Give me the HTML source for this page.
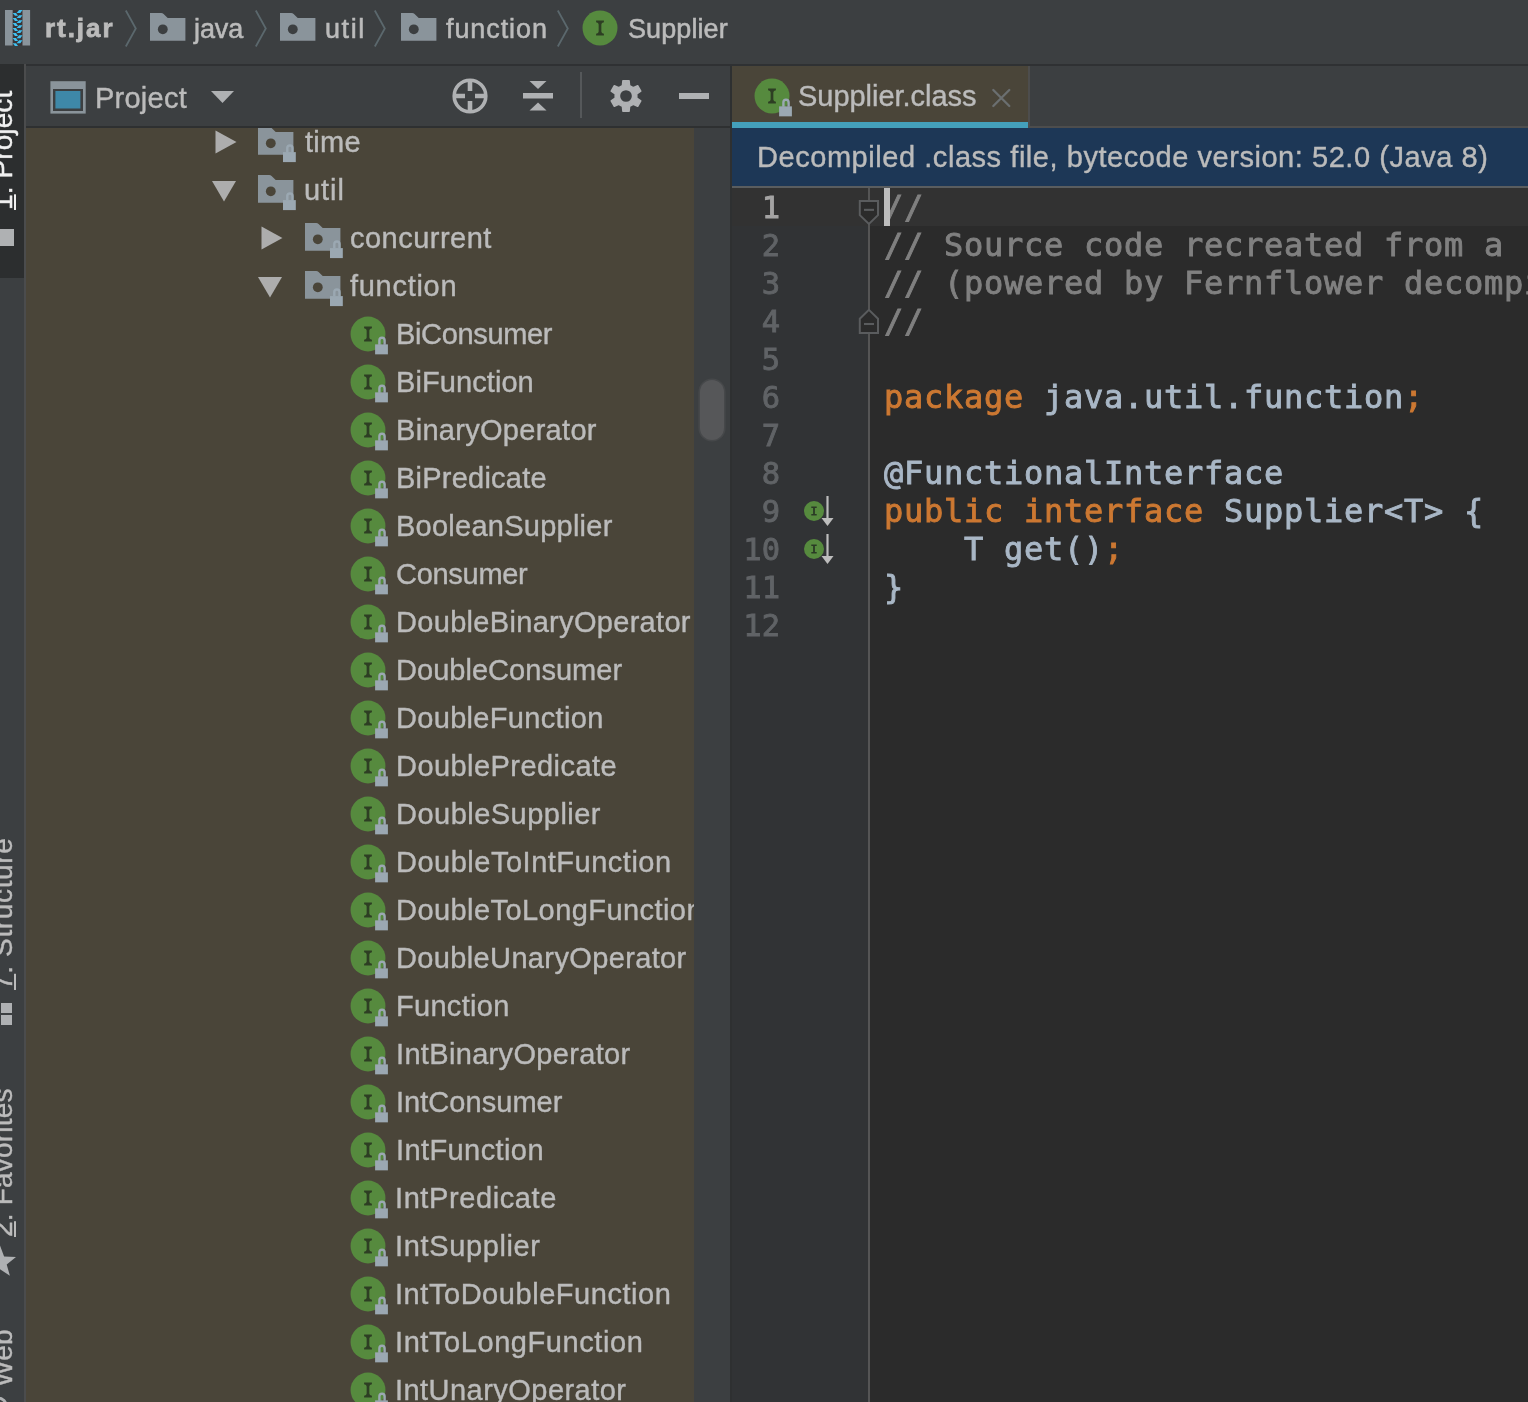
<!DOCTYPE html>
<html lang="en"><head><meta charset="utf-8"><title>Supplier.class</title>
<style>
html,body{margin:0;padding:0;}
body{width:1528px;height:1402px;overflow:hidden;background:#3c3f41;position:relative;font-family:"Liberation Sans", sans-serif;color:#bbbbbb;}
.abs{position:absolute;}
.t{position:absolute;white-space:nowrap;font-size:29px;line-height:32px;height:32px;color:#bbbbbb;will-change:transform;-webkit-text-stroke:0.4px;}
.code{position:absolute;left:884px;white-space:pre;font-family:"DejaVu Sans Mono", "Liberation Mono", monospace;font-size:32px;letter-spacing:0.734px;line-height:38px;height:38px;color:#a9b7c6;will-change:transform;-webkit-text-stroke:0.9px;}
.ln{position:absolute;left:732px;width:48px;text-align:right;white-space:pre;font-family:"DejaVu Sans Mono", "Liberation Mono", monospace;font-size:30.5px;line-height:38px;height:38px;color:#606366;will-change:transform;-webkit-text-stroke:0.9px;}
.k{color:#cc7832;}
.c{color:#808080;}
svg{position:absolute;overflow:visible;}
</style></head>
<body>
<div class="abs" style="left:0;top:0;width:1528px;height:64px;background:#3c3f41"></div>
<div class="abs" style="left:26px;top:64px;width:1502px;height:2px;background:#2f3133"></div>
<svg style="left:5px;top:10.1px" width="26" height="36" viewBox="0 0 26 36"><rect x="7.4" y="0" width="10.3" height="35.5" fill="#3a3436"/><rect x="0" y="0" width="7.65" height="35.5" fill="#8a949b"/><rect x="17.5" y="0" width="7.6" height="35.5" fill="#8a949b"/><path d="M11.6 3.00L14.1 0.10H17.5L15.3 3.00Z" fill="#3fc1f1"/><path d="M7.65 2.95H11L13.1 5.85H10Z" fill="#3fc1f1"/><path d="M11.6 8.03L14.1 5.13H17.5L15.3 8.03Z" fill="#3fc1f1"/><path d="M7.65 7.98H11L13.1 10.88H10Z" fill="#3fc1f1"/><path d="M11.6 13.06L14.1 10.16H17.5L15.3 13.06Z" fill="#3fc1f1"/><path d="M7.65 13.01H11L13.1 15.91H10Z" fill="#3fc1f1"/><path d="M11.6 18.09L14.1 15.19H17.5L15.3 18.09Z" fill="#3fc1f1"/><path d="M7.65 18.04H11L13.1 20.94H10Z" fill="#3fc1f1"/><path d="M11.6 23.12L14.1 20.22H17.5L15.3 23.12Z" fill="#3fc1f1"/><path d="M7.65 23.07H11L13.1 25.97H10Z" fill="#3fc1f1"/><path d="M11.6 28.15L14.1 25.25H17.5L15.3 28.15Z" fill="#3fc1f1"/><path d="M7.65 28.10H11L13.1 31.00H10Z" fill="#3fc1f1"/><path d="M11.6 33.18L14.1 30.28H17.5L15.3 33.18Z" fill="#3fc1f1"/><path d="M7.65 33.13H11L13.1 36.03H10Z" fill="#3fc1f1"/></svg>
<div class="t" id="c_rt" style="left:45px;top:12.0px;letter-spacing:1.939px;font-weight:bold;font-size:26px;-webkit-text-stroke:0.8px;">rt.jar</div>
<svg style="left:124.5px;top:10px" width="12" height="37" viewBox="0 0 12 37"><path d="M0.8 0.5L10.8 18.5L0.8 36.5" fill="none" stroke="#5b686d" stroke-width="1.8"/></svg>
<svg style="left:150.4px;top:13.3px" width="40" height="36" viewBox="0 0 40 36"><path d="M0 0H11.2Q12.6 0 13.6 1L17.7 5.1H35.4V27.7H0Z" fill="#8a949b"/><circle cx="12.8" cy="16.3" r="4.9" fill="#3c3f41"/></svg>
<div class="t" id="c_java" style="left:194px;top:13px;letter-spacing:-0.087px;font-size:27px;-webkit-text-stroke:0.55px;">java</div>
<svg style="left:254.5px;top:10px" width="12" height="37" viewBox="0 0 12 37"><path d="M0.8 0.5L10.8 18.5L0.8 36.5" fill="none" stroke="#5b686d" stroke-width="1.8"/></svg>
<svg style="left:280.3px;top:13.3px" width="40" height="36" viewBox="0 0 40 36"><path d="M0 0H11.2Q12.6 0 13.6 1L17.7 5.1H35.4V27.7H0Z" fill="#8a949b"/><circle cx="12.8" cy="16.3" r="4.9" fill="#3c3f41"/></svg>
<div class="t" id="c_util" style="left:325px;top:13px;letter-spacing:1.577px;font-size:27px;-webkit-text-stroke:0.55px;">util</div>
<svg style="left:374.3px;top:10px" width="12" height="37" viewBox="0 0 12 37"><path d="M0.8 0.5L10.8 18.5L0.8 36.5" fill="none" stroke="#5b686d" stroke-width="1.8"/></svg>
<svg style="left:400.5px;top:13.3px" width="40" height="36" viewBox="0 0 40 36"><path d="M0 0H11.2Q12.6 0 13.6 1L17.7 5.1H35.4V27.7H0Z" fill="#8a949b"/><circle cx="12.8" cy="16.3" r="4.9" fill="#3c3f41"/></svg>
<div class="t" id="c_function" style="left:446px;top:13px;letter-spacing:0.911px;font-size:27px;-webkit-text-stroke:0.55px;">function</div>
<svg style="left:556.7px;top:10px" width="12" height="37" viewBox="0 0 12 37"><path d="M0.8 0.5L10.8 18.5L0.8 36.5" fill="none" stroke="#5b686d" stroke-width="1.8"/></svg>
<svg style="left:580px;top:7.600000000000001px" width="44" height="44" viewBox="0 0 44 44"><circle cx="20" cy="20" r="17.5" fill="#568a3e"/><path d="M16.1 12.6h7.8v1.6q-2.55 0.5-2.55 2.2v7.2q0 1.7 2.55 2.2v1.6h-7.8v-1.6q2.55-0.5 2.55-2.2v-7.2q0-1.7-2.55-2.2z" fill="#2d3e23"/></svg>
<div class="t" id="c_supplier" style="left:628px;top:13px;letter-spacing:0.086px;font-size:27px;-webkit-text-stroke:0.55px;">Supplier</div>
<div class="abs" style="left:0;top:66px;width:24px;height:1336px;background:#3c3f41"></div>
<div class="abs" style="left:0;top:64px;width:24px;height:214px;background:#2c2e2f"></div>
<div class="abs" style="left:24px;top:64px;width:2px;height:1338px;background:#4b4c4d"></div>
<div class="t" style="left:-13px;top:210px;transform-origin:0 0;transform:rotate(-90deg);font-size:28px;color:#f0f0f0;letter-spacing:0.1px"><u>1</u>: Project</div>
<div class="t" style="left:-13px;top:990px;transform-origin:0 0;transform:rotate(-90deg);font-size:28px;color:#bbbbbb;letter-spacing:0.65px"><u>7</u>: Structure</div>
<div class="t" style="left:-13px;top:1237px;transform-origin:0 0;transform:rotate(-90deg);font-size:28px;color:#bbbbbb;letter-spacing:0.2px"><u>2</u>: Favorites</div>
<div class="t" style="left:-13px;top:1387.2px;transform-origin:0 0;transform:rotate(-90deg);font-size:28px;color:#bbbbbb;letter-spacing:0.3px">Web</div>
<div class="abs" style="left:0;top:229px;width:13.7px;height:16.5px;background:#afb1b3"></div>
<div class="abs" style="left:1px;top:1003px;width:10.8px;height:10px;background:#afb1b3"></div>
<div class="abs" style="left:1px;top:1015px;width:10.8px;height:10px;background:#afb1b3"></div>
<svg style="left:0;top:0" width="40" height="1402" viewBox="0 0 40 1402"><path d="M0.0 1245.4L4.1 1256.5L16.0 1257.0L6.7 1264.4L9.9 1275.8L0.0 1269.3L-9.9 1275.8L-6.7 1264.4L-16.0 1257.0L-4.1 1256.5Z" fill="#afb1b3"/><circle cx="-2" cy="1406.5" r="8.5" fill="none" stroke="#afb1b3" stroke-width="3"/></svg>
<div class="abs" style="left:26px;top:66px;width:704px;height:60px;background:#3c3f41"></div>
<div class="abs" style="left:26px;top:126px;width:704px;height:2px;background:#2e3031"></div>
<svg style="left:50px;top:81px" width="36" height="33" viewBox="0 0 36 33"><rect x="0.4" y="0.2" width="35.3" height="32.4" fill="#8a949b"/><rect x="3" y="8" width="30" height="22" fill="#3c3f41"/><rect x="5.4" y="10" width="25" height="17.5" fill="#3e88a8"/></svg>
<div class="t" id="p_project" style="left:95px;top:81.9px;letter-spacing:0.241px;">Project</div>
<svg style="left:211px;top:91px" width="24" height="13" viewBox="0 0 24 13"><path d="M0 0H23L11.5 12Z" fill="#afb1b3"/></svg>
<svg style="left:450px;top:76px" width="40" height="40" viewBox="0 0 40 40"><circle cx="20" cy="20" r="15.8" fill="none" stroke="#afb1b3" stroke-width="3.6"/><path d="M20 4V15M20 25V36M4 20H15M25 20H36" stroke="#afb1b3" stroke-width="4.6" fill="none"/></svg>
<svg style="left:523px;top:80px" width="30" height="32" viewBox="0 0 30 32"><rect x="0" y="13" width="30" height="5.5" fill="#afb1b3"/><path d="M6.5 1H23.5L15 9Z" fill="#afb1b3"/><path d="M6.5 30.5H23.5L15 22.5Z" fill="#afb1b3"/></svg>
<div class="abs" style="left:580px;top:72px;width:2px;height:46px;background:#55585a"></div>
<svg style="left:606px;top:76px" width="40" height="40" viewBox="0 0 40 40"><path d="M16.42 9.60L16.89 4.71L23.11 4.71L23.58 9.60L27.22 11.70L31.68 9.66L34.79 15.05L30.80 17.90L30.80 22.10L34.79 24.95L31.68 30.34L27.22 28.30L23.58 30.40L23.11 35.29L16.89 35.29L16.42 30.40L12.78 28.30L8.32 30.34L5.21 24.95L9.20 22.10L9.20 17.90L5.21 15.05L8.32 9.66L12.78 11.70ZM26.60 20A6.6 6.6 0 1 0 13.40 20A6.6 6.6 0 1 0 26.60 20Z" fill="#afb1b3" fill-rule="evenodd" stroke="#afb1b3" stroke-width="1.5" stroke-linejoin="round"/></svg>
<div class="abs" style="left:679px;top:93px;width:30px;height:5.5px;background:#afb1b3"></div>
<div class="abs" style="left:26px;top:128px;width:668px;height:1274px;background:#4a4539;overflow:hidden">
<svg style="left:188.5px;top:2px" width="22" height="24" viewBox="0 0 22 24"><path d="M0.5 0.5V23.5L21.5 12Z" fill="#adadad"/></svg>
<svg style="left:232.2px;top:-1.0999999999999943px" width="40" height="36" viewBox="0 0 40 36"><path d="M0 0H11.2Q12.6 0 13.6 1L17.7 5.1H35.4V27.7H0Z" fill="#8a949b"/><circle cx="12.8" cy="16.3" r="4.9" fill="#4a4539"/><g transform="translate(25,25.1)"><path d="M4.3 0.5V-4a2.6 2.6 0 0 1 5.2 0V0.5" fill="none" stroke="#9ba8b2" stroke-width="2.4"/><rect x="0" y="0" width="12.8" height="10" fill="#9ba8b2"/></g></svg>
<div class="t" id="r0" style="left:279px;top:-1.9000000000000057px;letter-spacing:0.242px;">time</div>
<svg style="left:186px;top:53px" width="24" height="21" viewBox="0 0 24 21"><path d="M0 0H24L12 20.5Z" fill="#adadad"/></svg>
<svg style="left:232.2px;top:46.900000000000006px" width="40" height="36" viewBox="0 0 40 36"><path d="M0 0H11.2Q12.6 0 13.6 1L17.7 5.1H35.4V27.7H0Z" fill="#8a949b"/><circle cx="12.8" cy="16.3" r="4.9" fill="#4a4539"/><g transform="translate(25,25.1)"><path d="M4.3 0.5V-4a2.6 2.6 0 0 1 5.2 0V0.5" fill="none" stroke="#9ba8b2" stroke-width="2.4"/><rect x="0" y="0" width="12.8" height="10" fill="#9ba8b2"/></g></svg>
<div class="t" id="r1" style="left:278px;top:46.099999999999994px;letter-spacing:0.919px;">util</div>
<svg style="left:234.5px;top:98px" width="22" height="24" viewBox="0 0 22 24"><path d="M0.5 0.5V23.5L21.5 12Z" fill="#adadad"/></svg>
<svg style="left:278.6px;top:94.9px" width="40" height="36" viewBox="0 0 40 36"><path d="M0 0H11.2Q12.6 0 13.6 1L17.7 5.1H35.4V27.7H0Z" fill="#8a949b"/><circle cx="12.8" cy="16.3" r="4.9" fill="#4a4539"/><g transform="translate(25,25.1)"><path d="M4.3 0.5V-4a2.6 2.6 0 0 1 5.2 0V0.5" fill="none" stroke="#9ba8b2" stroke-width="2.4"/><rect x="0" y="0" width="12.8" height="10" fill="#9ba8b2"/></g></svg>
<div class="t" id="r2" style="left:324px;top:94.1px;letter-spacing:0.480px;">concurrent</div>
<svg style="left:232px;top:149px" width="24" height="21" viewBox="0 0 24 21"><path d="M0 0H24L12 20.5Z" fill="#adadad"/></svg>
<svg style="left:278.6px;top:142.89999999999998px" width="40" height="36" viewBox="0 0 40 36"><path d="M0 0H11.2Q12.6 0 13.6 1L17.7 5.1H35.4V27.7H0Z" fill="#8a949b"/><circle cx="12.8" cy="16.3" r="4.9" fill="#4a4539"/><g transform="translate(25,25.1)"><path d="M4.3 0.5V-4a2.6 2.6 0 0 1 5.2 0V0.5" fill="none" stroke="#9ba8b2" stroke-width="2.4"/><rect x="0" y="0" width="12.8" height="10" fill="#9ba8b2"/></g></svg>
<div class="t" id="r3" style="left:324px;top:142.10000000000002px;letter-spacing:0.711px;">function</div>
<svg style="left:321.9px;top:185.85000000000002px" width="44" height="44" viewBox="0 0 44 44"><circle cx="20" cy="20" r="17.45" fill="#568a3e"/><path d="M16.1 12.6h7.8v1.6q-2.55 0.5-2.55 2.2v7.2q0 1.7 2.55 2.2v1.6h-7.8v-1.6q2.55-0.5 2.55-2.2v-7.2q0-1.7-2.55-2.2z" fill="#2d3e23"/><g transform="translate(27.1,30.35)"><path d="M4.3 0.5V-4a2.6 2.6 0 0 1 5.2 0V0.5" fill="none" stroke="#9ba8b2" stroke-width="2.4"/><rect x="0" y="0" width="12.8" height="10" fill="#9ba8b2"/></g></svg>
<div class="t" id="r4" style="left:370px;top:190.10000000000002px;letter-spacing:-0.340px;">BiConsumer</div>
<svg style="left:321.9px;top:233.85000000000002px" width="44" height="44" viewBox="0 0 44 44"><circle cx="20" cy="20" r="17.45" fill="#568a3e"/><path d="M16.1 12.6h7.8v1.6q-2.55 0.5-2.55 2.2v7.2q0 1.7 2.55 2.2v1.6h-7.8v-1.6q2.55-0.5 2.55-2.2v-7.2q0-1.7-2.55-2.2z" fill="#2d3e23"/><g transform="translate(27.1,30.35)"><path d="M4.3 0.5V-4a2.6 2.6 0 0 1 5.2 0V0.5" fill="none" stroke="#9ba8b2" stroke-width="2.4"/><rect x="0" y="0" width="12.8" height="10" fill="#9ba8b2"/></g></svg>
<div class="t" id="r5" style="left:370px;top:238.10000000000002px;letter-spacing:0.082px;">BiFunction</div>
<svg style="left:321.9px;top:281.85px" width="44" height="44" viewBox="0 0 44 44"><circle cx="20" cy="20" r="17.45" fill="#568a3e"/><path d="M16.1 12.6h7.8v1.6q-2.55 0.5-2.55 2.2v7.2q0 1.7 2.55 2.2v1.6h-7.8v-1.6q2.55-0.5 2.55-2.2v-7.2q0-1.7-2.55-2.2z" fill="#2d3e23"/><g transform="translate(27.1,30.35)"><path d="M4.3 0.5V-4a2.6 2.6 0 0 1 5.2 0V0.5" fill="none" stroke="#9ba8b2" stroke-width="2.4"/><rect x="0" y="0" width="12.8" height="10" fill="#9ba8b2"/></g></svg>
<div class="t" id="r6" style="left:370px;top:286.1px;letter-spacing:0.295px;">BinaryOperator</div>
<svg style="left:321.9px;top:329.85px" width="44" height="44" viewBox="0 0 44 44"><circle cx="20" cy="20" r="17.45" fill="#568a3e"/><path d="M16.1 12.6h7.8v1.6q-2.55 0.5-2.55 2.2v7.2q0 1.7 2.55 2.2v1.6h-7.8v-1.6q2.55-0.5 2.55-2.2v-7.2q0-1.7-2.55-2.2z" fill="#2d3e23"/><g transform="translate(27.1,30.35)"><path d="M4.3 0.5V-4a2.6 2.6 0 0 1 5.2 0V0.5" fill="none" stroke="#9ba8b2" stroke-width="2.4"/><rect x="0" y="0" width="12.8" height="10" fill="#9ba8b2"/></g></svg>
<div class="t" id="r7" style="left:370px;top:334.1px;letter-spacing:0.228px;">BiPredicate</div>
<svg style="left:321.9px;top:377.85px" width="44" height="44" viewBox="0 0 44 44"><circle cx="20" cy="20" r="17.45" fill="#568a3e"/><path d="M16.1 12.6h7.8v1.6q-2.55 0.5-2.55 2.2v7.2q0 1.7 2.55 2.2v1.6h-7.8v-1.6q2.55-0.5 2.55-2.2v-7.2q0-1.7-2.55-2.2z" fill="#2d3e23"/><g transform="translate(27.1,30.35)"><path d="M4.3 0.5V-4a2.6 2.6 0 0 1 5.2 0V0.5" fill="none" stroke="#9ba8b2" stroke-width="2.4"/><rect x="0" y="0" width="12.8" height="10" fill="#9ba8b2"/></g></svg>
<div class="t" id="r8" style="left:370px;top:382.1px;letter-spacing:0.251px;">BooleanSupplier</div>
<svg style="left:321.9px;top:425.85px" width="44" height="44" viewBox="0 0 44 44"><circle cx="20" cy="20" r="17.45" fill="#568a3e"/><path d="M16.1 12.6h7.8v1.6q-2.55 0.5-2.55 2.2v7.2q0 1.7 2.55 2.2v1.6h-7.8v-1.6q2.55-0.5 2.55-2.2v-7.2q0-1.7-2.55-2.2z" fill="#2d3e23"/><g transform="translate(27.1,30.35)"><path d="M4.3 0.5V-4a2.6 2.6 0 0 1 5.2 0V0.5" fill="none" stroke="#9ba8b2" stroke-width="2.4"/><rect x="0" y="0" width="12.8" height="10" fill="#9ba8b2"/></g></svg>
<div class="t" id="r9" style="left:370px;top:430.1px;letter-spacing:-0.287px;">Consumer</div>
<svg style="left:321.9px;top:473.85px" width="44" height="44" viewBox="0 0 44 44"><circle cx="20" cy="20" r="17.45" fill="#568a3e"/><path d="M16.1 12.6h7.8v1.6q-2.55 0.5-2.55 2.2v7.2q0 1.7 2.55 2.2v1.6h-7.8v-1.6q2.55-0.5 2.55-2.2v-7.2q0-1.7-2.55-2.2z" fill="#2d3e23"/><g transform="translate(27.1,30.35)"><path d="M4.3 0.5V-4a2.6 2.6 0 0 1 5.2 0V0.5" fill="none" stroke="#9ba8b2" stroke-width="2.4"/><rect x="0" y="0" width="12.8" height="10" fill="#9ba8b2"/></g></svg>
<div class="t" id="r10" style="left:370px;top:478.1px;letter-spacing:0.315px;">DoubleBinaryOperator</div>
<svg style="left:321.9px;top:521.85px" width="44" height="44" viewBox="0 0 44 44"><circle cx="20" cy="20" r="17.45" fill="#568a3e"/><path d="M16.1 12.6h7.8v1.6q-2.55 0.5-2.55 2.2v7.2q0 1.7 2.55 2.2v1.6h-7.8v-1.6q2.55-0.5 2.55-2.2v-7.2q0-1.7-2.55-2.2z" fill="#2d3e23"/><g transform="translate(27.1,30.35)"><path d="M4.3 0.5V-4a2.6 2.6 0 0 1 5.2 0V0.5" fill="none" stroke="#9ba8b2" stroke-width="2.4"/><rect x="0" y="0" width="12.8" height="10" fill="#9ba8b2"/></g></svg>
<div class="t" id="r11" style="left:370px;top:526.1px;letter-spacing:0.034px;">DoubleConsumer</div>
<svg style="left:321.9px;top:569.85px" width="44" height="44" viewBox="0 0 44 44"><circle cx="20" cy="20" r="17.45" fill="#568a3e"/><path d="M16.1 12.6h7.8v1.6q-2.55 0.5-2.55 2.2v7.2q0 1.7 2.55 2.2v1.6h-7.8v-1.6q2.55-0.5 2.55-2.2v-7.2q0-1.7-2.55-2.2z" fill="#2d3e23"/><g transform="translate(27.1,30.35)"><path d="M4.3 0.5V-4a2.6 2.6 0 0 1 5.2 0V0.5" fill="none" stroke="#9ba8b2" stroke-width="2.4"/><rect x="0" y="0" width="12.8" height="10" fill="#9ba8b2"/></g></svg>
<div class="t" id="r12" style="left:370px;top:574.1px;letter-spacing:0.319px;">DoubleFunction</div>
<svg style="left:321.9px;top:617.85px" width="44" height="44" viewBox="0 0 44 44"><circle cx="20" cy="20" r="17.45" fill="#568a3e"/><path d="M16.1 12.6h7.8v1.6q-2.55 0.5-2.55 2.2v7.2q0 1.7 2.55 2.2v1.6h-7.8v-1.6q2.55-0.5 2.55-2.2v-7.2q0-1.7-2.55-2.2z" fill="#2d3e23"/><g transform="translate(27.1,30.35)"><path d="M4.3 0.5V-4a2.6 2.6 0 0 1 5.2 0V0.5" fill="none" stroke="#9ba8b2" stroke-width="2.4"/><rect x="0" y="0" width="12.8" height="10" fill="#9ba8b2"/></g></svg>
<div class="t" id="r13" style="left:370px;top:622.1px;letter-spacing:0.442px;">DoublePredicate</div>
<svg style="left:321.9px;top:665.85px" width="44" height="44" viewBox="0 0 44 44"><circle cx="20" cy="20" r="17.45" fill="#568a3e"/><path d="M16.1 12.6h7.8v1.6q-2.55 0.5-2.55 2.2v7.2q0 1.7 2.55 2.2v1.6h-7.8v-1.6q2.55-0.5 2.55-2.2v-7.2q0-1.7-2.55-2.2z" fill="#2d3e23"/><g transform="translate(27.1,30.35)"><path d="M4.3 0.5V-4a2.6 2.6 0 0 1 5.2 0V0.5" fill="none" stroke="#9ba8b2" stroke-width="2.4"/><rect x="0" y="0" width="12.8" height="10" fill="#9ba8b2"/></g></svg>
<div class="t" id="r14" style="left:370px;top:670.1px;letter-spacing:0.477px;">DoubleSupplier</div>
<svg style="left:321.9px;top:713.85px" width="44" height="44" viewBox="0 0 44 44"><circle cx="20" cy="20" r="17.45" fill="#568a3e"/><path d="M16.1 12.6h7.8v1.6q-2.55 0.5-2.55 2.2v7.2q0 1.7 2.55 2.2v1.6h-7.8v-1.6q2.55-0.5 2.55-2.2v-7.2q0-1.7-2.55-2.2z" fill="#2d3e23"/><g transform="translate(27.1,30.35)"><path d="M4.3 0.5V-4a2.6 2.6 0 0 1 5.2 0V0.5" fill="none" stroke="#9ba8b2" stroke-width="2.4"/><rect x="0" y="0" width="12.8" height="10" fill="#9ba8b2"/></g></svg>
<div class="t" id="r15" style="left:370px;top:718.1px;letter-spacing:0.507px;">DoubleToIntFunction</div>
<svg style="left:321.9px;top:761.85px" width="44" height="44" viewBox="0 0 44 44"><circle cx="20" cy="20" r="17.45" fill="#568a3e"/><path d="M16.1 12.6h7.8v1.6q-2.55 0.5-2.55 2.2v7.2q0 1.7 2.55 2.2v1.6h-7.8v-1.6q2.55-0.5 2.55-2.2v-7.2q0-1.7-2.55-2.2z" fill="#2d3e23"/><g transform="translate(27.1,30.35)"><path d="M4.3 0.5V-4a2.6 2.6 0 0 1 5.2 0V0.5" fill="none" stroke="#9ba8b2" stroke-width="2.4"/><rect x="0" y="0" width="12.8" height="10" fill="#9ba8b2"/></g></svg>
<div class="t" id="r16" style="left:370px;top:766.1px;letter-spacing:0.435px;">DoubleToLongFunction</div>
<svg style="left:321.9px;top:809.85px" width="44" height="44" viewBox="0 0 44 44"><circle cx="20" cy="20" r="17.45" fill="#568a3e"/><path d="M16.1 12.6h7.8v1.6q-2.55 0.5-2.55 2.2v7.2q0 1.7 2.55 2.2v1.6h-7.8v-1.6q2.55-0.5 2.55-2.2v-7.2q0-1.7-2.55-2.2z" fill="#2d3e23"/><g transform="translate(27.1,30.35)"><path d="M4.3 0.5V-4a2.6 2.6 0 0 1 5.2 0V0.5" fill="none" stroke="#9ba8b2" stroke-width="2.4"/><rect x="0" y="0" width="12.8" height="10" fill="#9ba8b2"/></g></svg>
<div class="t" id="r17" style="left:370px;top:814.1px;letter-spacing:0.362px;">DoubleUnaryOperator</div>
<svg style="left:321.9px;top:857.85px" width="44" height="44" viewBox="0 0 44 44"><circle cx="20" cy="20" r="17.45" fill="#568a3e"/><path d="M16.1 12.6h7.8v1.6q-2.55 0.5-2.55 2.2v7.2q0 1.7 2.55 2.2v1.6h-7.8v-1.6q2.55-0.5 2.55-2.2v-7.2q0-1.7-2.55-2.2z" fill="#2d3e23"/><g transform="translate(27.1,30.35)"><path d="M4.3 0.5V-4a2.6 2.6 0 0 1 5.2 0V0.5" fill="none" stroke="#9ba8b2" stroke-width="2.4"/><rect x="0" y="0" width="12.8" height="10" fill="#9ba8b2"/></g></svg>
<div class="t" id="r18" style="left:370px;top:862.1px;letter-spacing:0.297px;">Function</div>
<svg style="left:321.9px;top:905.8499999999999px" width="44" height="44" viewBox="0 0 44 44"><circle cx="20" cy="20" r="17.45" fill="#568a3e"/><path d="M16.1 12.6h7.8v1.6q-2.55 0.5-2.55 2.2v7.2q0 1.7 2.55 2.2v1.6h-7.8v-1.6q2.55-0.5 2.55-2.2v-7.2q0-1.7-2.55-2.2z" fill="#2d3e23"/><g transform="translate(27.1,30.35)"><path d="M4.3 0.5V-4a2.6 2.6 0 0 1 5.2 0V0.5" fill="none" stroke="#9ba8b2" stroke-width="2.4"/><rect x="0" y="0" width="12.8" height="10" fill="#9ba8b2"/></g></svg>
<div class="t" id="r19" style="left:370px;top:910.0999999999999px;letter-spacing:0.333px;">IntBinaryOperator</div>
<svg style="left:321.9px;top:953.8499999999999px" width="44" height="44" viewBox="0 0 44 44"><circle cx="20" cy="20" r="17.45" fill="#568a3e"/><path d="M16.1 12.6h7.8v1.6q-2.55 0.5-2.55 2.2v7.2q0 1.7 2.55 2.2v1.6h-7.8v-1.6q2.55-0.5 2.55-2.2v-7.2q0-1.7-2.55-2.2z" fill="#2d3e23"/><g transform="translate(27.1,30.35)"><path d="M4.3 0.5V-4a2.6 2.6 0 0 1 5.2 0V0.5" fill="none" stroke="#9ba8b2" stroke-width="2.4"/><rect x="0" y="0" width="12.8" height="10" fill="#9ba8b2"/></g></svg>
<div class="t" id="r20" style="left:370px;top:958.0999999999999px;letter-spacing:0.041px;">IntConsumer</div>
<svg style="left:321.9px;top:1001.8499999999999px" width="44" height="44" viewBox="0 0 44 44"><circle cx="20" cy="20" r="17.45" fill="#568a3e"/><path d="M16.1 12.6h7.8v1.6q-2.55 0.5-2.55 2.2v7.2q0 1.7 2.55 2.2v1.6h-7.8v-1.6q2.55-0.5 2.55-2.2v-7.2q0-1.7-2.55-2.2z" fill="#2d3e23"/><g transform="translate(27.1,30.35)"><path d="M4.3 0.5V-4a2.6 2.6 0 0 1 5.2 0V0.5" fill="none" stroke="#9ba8b2" stroke-width="2.4"/><rect x="0" y="0" width="12.8" height="10" fill="#9ba8b2"/></g></svg>
<div class="t" id="r21" style="left:370px;top:1006.0999999999999px;letter-spacing:0.405px;">IntFunction</div>
<svg style="left:321.9px;top:1049.85px" width="44" height="44" viewBox="0 0 44 44"><circle cx="20" cy="20" r="17.45" fill="#568a3e"/><path d="M16.1 12.6h7.8v1.6q-2.55 0.5-2.55 2.2v7.2q0 1.7 2.55 2.2v1.6h-7.8v-1.6q2.55-0.5 2.55-2.2v-7.2q0-1.7-2.55-2.2z" fill="#2d3e23"/><g transform="translate(27.1,30.35)"><path d="M4.3 0.5V-4a2.6 2.6 0 0 1 5.2 0V0.5" fill="none" stroke="#9ba8b2" stroke-width="2.4"/><rect x="0" y="0" width="12.8" height="10" fill="#9ba8b2"/></g></svg>
<div class="t" id="r22" style="left:369px;top:1054.1px;letter-spacing:0.592px;">IntPredicate</div>
<svg style="left:321.9px;top:1097.85px" width="44" height="44" viewBox="0 0 44 44"><circle cx="20" cy="20" r="17.45" fill="#568a3e"/><path d="M16.1 12.6h7.8v1.6q-2.55 0.5-2.55 2.2v7.2q0 1.7 2.55 2.2v1.6h-7.8v-1.6q2.55-0.5 2.55-2.2v-7.2q0-1.7-2.55-2.2z" fill="#2d3e23"/><g transform="translate(27.1,30.35)"><path d="M4.3 0.5V-4a2.6 2.6 0 0 1 5.2 0V0.5" fill="none" stroke="#9ba8b2" stroke-width="2.4"/><rect x="0" y="0" width="12.8" height="10" fill="#9ba8b2"/></g></svg>
<div class="t" id="r23" style="left:369px;top:1102.1px;letter-spacing:0.639px;">IntSupplier</div>
<svg style="left:321.9px;top:1145.85px" width="44" height="44" viewBox="0 0 44 44"><circle cx="20" cy="20" r="17.45" fill="#568a3e"/><path d="M16.1 12.6h7.8v1.6q-2.55 0.5-2.55 2.2v7.2q0 1.7 2.55 2.2v1.6h-7.8v-1.6q2.55-0.5 2.55-2.2v-7.2q0-1.7-2.55-2.2z" fill="#2d3e23"/><g transform="translate(27.1,30.35)"><path d="M4.3 0.5V-4a2.6 2.6 0 0 1 5.2 0V0.5" fill="none" stroke="#9ba8b2" stroke-width="2.4"/><rect x="0" y="0" width="12.8" height="10" fill="#9ba8b2"/></g></svg>
<div class="t" id="r24" style="left:369px;top:1150.1px;letter-spacing:0.551px;">IntToDoubleFunction</div>
<svg style="left:321.9px;top:1193.85px" width="44" height="44" viewBox="0 0 44 44"><circle cx="20" cy="20" r="17.45" fill="#568a3e"/><path d="M16.1 12.6h7.8v1.6q-2.55 0.5-2.55 2.2v7.2q0 1.7 2.55 2.2v1.6h-7.8v-1.6q2.55-0.5 2.55-2.2v-7.2q0-1.7-2.55-2.2z" fill="#2d3e23"/><g transform="translate(27.1,30.35)"><path d="M4.3 0.5V-4a2.6 2.6 0 0 1 5.2 0V0.5" fill="none" stroke="#9ba8b2" stroke-width="2.4"/><rect x="0" y="0" width="12.8" height="10" fill="#9ba8b2"/></g></svg>
<div class="t" id="r25" style="left:369px;top:1198.1px;letter-spacing:0.577px;">IntToLongFunction</div>
<svg style="left:321.9px;top:1241.85px" width="44" height="44" viewBox="0 0 44 44"><circle cx="20" cy="20" r="17.45" fill="#568a3e"/><path d="M16.1 12.6h7.8v1.6q-2.55 0.5-2.55 2.2v7.2q0 1.7 2.55 2.2v1.6h-7.8v-1.6q2.55-0.5 2.55-2.2v-7.2q0-1.7-2.55-2.2z" fill="#2d3e23"/><g transform="translate(27.1,30.35)"><path d="M4.3 0.5V-4a2.6 2.6 0 0 1 5.2 0V0.5" fill="none" stroke="#9ba8b2" stroke-width="2.4"/><rect x="0" y="0" width="12.8" height="10" fill="#9ba8b2"/></g></svg>
<div class="t" id="r26" style="left:369px;top:1246.1px;letter-spacing:0.459px;">IntUnaryOperator</div>
</div>
<div class="abs" style="left:694px;top:128px;width:36px;height:1274px;background:#3c3f41"></div>
<div class="abs" style="left:700px;top:380px;width:24px;height:60px;border-radius:12px;background:#565759;box-shadow:0 0 0 1.6px #46484a"></div>
<div class="abs" style="left:730px;top:66px;width:2px;height:1336px;background:#2e3031"></div>
<div class="abs" style="left:732px;top:66px;width:796px;height:60px;background:#3c3f41"></div>
<div class="abs" style="left:732px;top:126px;width:796px;height:2px;background:#4d4d4d"></div>
<div class="abs" style="left:1028px;top:66px;width:2px;height:60px;background:#4d4d4d"></div>
<div class="abs" style="left:732px;top:66px;width:296px;height:56px;background:#4a4539"></div>
<div class="abs" style="left:732px;top:122px;width:296px;height:6px;background:#44a0bb"></div>
<svg style="left:752.2px;top:76px" width="44" height="44" viewBox="0 0 44 44"><circle cx="20" cy="20" r="17.5" fill="#568a3e"/><path d="M16.1 12.6h7.8v1.6q-2.55 0.5-2.55 2.2v7.2q0 1.7 2.55 2.2v1.6h-7.8v-1.6q2.55-0.5 2.55-2.2v-7.2q0-1.7-2.55-2.2z" fill="#2d3e23"/><g transform="translate(27.1,30.35)"><path d="M4.3 0.5V-4a2.6 2.6 0 0 1 5.2 0V0.5" fill="none" stroke="#9ba8b2" stroke-width="2.4"/><rect x="0" y="0" width="12.8" height="10" fill="#9ba8b2"/></g></svg>
<div class="t" id="tab" style="left:798px;top:80.0px;letter-spacing:-0.037px;">Supplier.class</div>
<svg style="left:991.5px;top:88.5px" width="18" height="18" viewBox="0 0 18 18"><path d="M1.3 1L17.3 17M17.3 1L1.3 17" stroke="#6b6f70" stroke-width="2.3" stroke-linecap="round" fill="none"/></svg>
<div class="abs" style="left:732px;top:128px;width:796px;height:58px;background:#1d3756"></div>
<div class="t" id="banner" style="left:757px;top:141.2px;letter-spacing:0.550px;">Decompiled .class file, bytecode version: 52.0 (Java 8)</div>
<div class="abs" style="left:732px;top:186px;width:796px;height:2px;background:#5a5d5f"></div>
<div class="abs" style="left:732px;top:188px;width:136px;height:1214px;background:#313335"></div>
<div class="abs" style="left:868px;top:188px;width:2px;height:1214px;background:#555555"></div>
<div class="abs" style="left:870px;top:188px;width:658px;height:1214px;background:#2b2b2b"></div>
<div class="abs" style="left:870px;top:188px;width:658px;height:38px;background:#323232"></div>
<div class="abs" style="left:732px;top:188px;width:136px;height:38px;background:#323232"></div>
<div class="ln" style="top:188.5px;color:#a4a3a3">1</div>
<div class="code" style="top:188px"><span class="c">//</span></div>
<div class="ln" style="top:226.5px;color:#606366">2</div>
<div class="code" style="top:226px"><span class="c">// Source code recreated from a .class file by IntelliJ IDEA</span></div>
<div class="ln" style="top:264.5px;color:#606366">3</div>
<div class="code" style="top:264px"><span class="c">// (powered by Fernflower decompiler)</span></div>
<div class="ln" style="top:302.5px;color:#606366">4</div>
<div class="code" style="top:302px"><span class="c">//</span></div>
<div class="ln" style="top:340.5px;color:#606366">5</div>
<div class="ln" style="top:378.5px;color:#606366">6</div>
<div class="code" style="top:378px"><span class="k">package</span> java.util.function<span class="k">;</span></div>
<div class="ln" style="top:416.5px;color:#606366">7</div>
<div class="ln" style="top:454.5px;color:#606366">8</div>
<div class="code" style="top:454px">@FunctionalInterface</div>
<div class="ln" style="top:492.5px;color:#606366">9</div>
<div class="code" style="top:492px"><span class="k">public interface</span> Supplier&lt;T&gt; {</div>
<div class="ln" style="top:530.5px;color:#606366">10</div>
<div class="code" style="top:530px">    T get()<span class="k">;</span></div>
<div class="ln" style="top:568.5px;color:#606366">11</div>
<div class="code" style="top:568px">}</div>
<div class="ln" style="top:606.5px;color:#606366">12</div>
<div class="abs" style="left:884px;top:188px;width:6px;height:38px;background:#bdbdbd"></div>
<svg style="left:0;top:0" width="1528" height="400" viewBox="0 0 1528 400"><path d="M859.8 200.9H878V215.1L868.9 223.9L859.8 215.1Z" fill="#2b2b2b" stroke="#5a5c5e" stroke-width="2"/><path d="M864 209.85H874" stroke="#5a5c5e" stroke-width="2.1"/><path d="M859.8 333H878V318.7L868.9 309.9L859.8 318.7Z" fill="#2b2b2b" stroke="#5a5c5e" stroke-width="2"/><path d="M864 324H874" stroke="#5a5c5e" stroke-width="2.1"/></svg>
<svg style="left:802px;top:495px" width="34" height="32" viewBox="0 0 34 32"><circle cx="12" cy="16" r="10" fill="#568a3e"/><path d="M9.3 11.4h5.4v1.7h-1.8v5.8h1.8v1.7H9.3v-1.7h1.8v-5.8H9.3z" fill="#2a3a25"/><path d="M25.5 1V24" stroke="#bdbdbd" stroke-width="2.2"/><path d="M19.5 23H31.5L25.5 31Z" fill="#bdbdbd"/></svg>
<svg style="left:802px;top:533px" width="34" height="32" viewBox="0 0 34 32"><circle cx="12" cy="16" r="10" fill="#568a3e"/><path d="M9.3 11.4h5.4v1.7h-1.8v5.8h1.8v1.7H9.3v-1.7h1.8v-5.8H9.3z" fill="#2a3a25"/><path d="M25.5 1V24" stroke="#bdbdbd" stroke-width="2.2"/><path d="M19.5 23H31.5L25.5 31Z" fill="#bdbdbd"/></svg>
</body></html>
